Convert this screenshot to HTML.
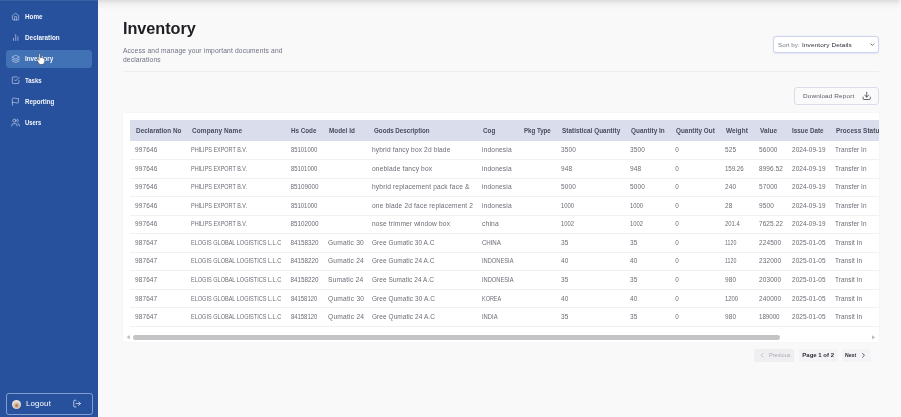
<!DOCTYPE html>
<html><head><meta charset="utf-8"><title>Inventory</title>
<style>
html,body{margin:0;padding:0;}
body{width:901px;height:417px;overflow:hidden;background:#f9f9fa;font-family:"Liberation Sans",sans-serif;position:relative;}
.t{position:absolute;white-space:nowrap;display:block;transform-origin:0 50%;}
.r{position:absolute;}
svg.i{position:absolute;overflow:visible;}
#wrap{position:absolute;left:-10px;top:-10px;width:921px;height:437px;background:#f9f9fa;filter:blur(0.55px);}
#in{position:absolute;left:10px;top:10px;width:901px;height:417px;}
</style></head><body>
<div id="wrap"><div id="in">
<div class="r" style="left:-10.00px;top:-10.00px;width:108.20px;height:440.00px;background:#27509d;"></div>
<div class="r" style="left:6.20px;top:50.10px;width:86.30px;height:17.80px;background:#4272b6;border-radius:3.5px;"></div>
<span class="t" style="left:24.80px;top:12px;font-size:6.8px;line-height:10px;font-weight:bold;color:#f2f5fc;letter-spacing:0.000px;transform:scaleX(0.9263);">Home</span>
<span class="t" style="left:24.80px;top:33px;font-size:6.8px;line-height:10px;font-weight:bold;color:#f2f5fc;letter-spacing:0.000px;transform:scaleX(0.9369);">Declaration</span>
<span class="t" style="left:24.80px;top:54px;font-size:6.8px;line-height:10px;font-weight:bold;color:#f2f5fc;letter-spacing:0.000px;transform:scaleX(0.9213);">Inventory</span>
<span class="t" style="left:24.80px;top:76px;font-size:6.8px;line-height:10px;font-weight:bold;color:#f2f5fc;letter-spacing:0.000px;transform:scaleX(0.8894);">Tasks</span>
<span class="t" style="left:24.80px;top:97px;font-size:6.8px;line-height:10px;font-weight:bold;color:#f2f5fc;letter-spacing:0.000px;transform:scaleX(0.9094);">Reporting</span>
<span class="t" style="left:24.80px;top:118px;font-size:6.8px;line-height:10px;font-weight:bold;color:#f2f5fc;letter-spacing:0.000px;transform:scaleX(0.8570);">Users</span>
<div class="r" style="left:6.00px;top:392.70px;width:86.60px;height:21.90px;background:transparent;border:0.8px solid rgba(185,204,236,0.62);border-radius:2.8px;box-sizing:border-box;"></div>
<span class="t" style="left:25.50px;top:398px;font-size:7.6px;line-height:11px;color:#ffffff;letter-spacing:0.144px;transform:scaleX(1.0371);">Logout</span>
<span class="t" style="left:122.80px;top:17px;font-size:16.4px;line-height:22px;font-weight:bold;color:#1e1e24;letter-spacing:-0.062px;transform:scaleX(0.9924);">Inventory</span>
<span class="t" style="left:122.60px;top:46px;font-size:6.4px;line-height:10px;color:#6f7280;letter-spacing:0.145px;transform:scaleX(1.0457);">Access and manage your important documents and</span>
<span class="t" style="left:122.60px;top:55px;font-size:6.4px;line-height:10px;color:#6f7280;letter-spacing:0.138px;transform:scaleX(1.0480);">declarations</span>
<div class="r" style="left:122.50px;top:70.90px;width:756.50px;height:0.80px;background:#eeeef0;"></div>
<div class="r" style="left:773.20px;top:35.90px;width:105.60px;height:17.60px;background:#ffffff;border:0.8px solid #cdd2f0;border-radius:3.2px;box-sizing:border-box;box-shadow:0 0.5px 1.2px rgba(120,130,200,0.15);"></div>
<span class="t" style="left:777.80px;top:40px;font-size:6.2px;line-height:9px;color:#7a7d88;letter-spacing:0.021px;transform:scaleX(1.0078);">Sort by:</span>
<span class="t" style="left:802.00px;top:40px;font-size:6.2px;line-height:9px;color:#2a2d38;letter-spacing:0.110px;transform:scaleX(1.0406);">Inventory Details</span>
<div class="r" style="left:794.00px;top:86.90px;width:84.80px;height:17.80px;background:#fafafb;border:0.8px solid #dadde9;border-radius:3.2px;box-sizing:border-box;"></div>
<span class="t" style="left:802.60px;top:91px;font-size:6.2px;line-height:9px;color:#5a5d68;letter-spacing:0.114px;transform:scaleX(1.0358);">Download Report</span>
<div class="r" style="left:122.50px;top:112.50px;width:756.20px;height:229.00px;background:#ffffff;border-radius:2px;box-shadow:0 0 2px rgba(0,0,0,0.06);"></div>
<div class="r" style="left:130.00px;top:120.00px;width:748.70px;height:21.00px;background:#d9ddec;"></div>
<span class="t" style="left:135.50px;top:126px;font-size:6.3px;line-height:10px;font-weight:bold;color:#484c60;letter-spacing:0.037px;transform:scaleX(1.0116);">Declaration No</span>
<span class="t" style="left:192.40px;top:126px;font-size:6.3px;line-height:10px;font-weight:bold;color:#484c60;letter-spacing:0.102px;transform:scaleX(1.0258);">Company Name</span>
<span class="t" style="left:291.40px;top:126px;font-size:6.3px;line-height:10px;font-weight:bold;color:#484c60;letter-spacing:-0.011px;transform:scaleX(0.9970);">Hs Code</span>
<span class="t" style="left:329.10px;top:126px;font-size:6.3px;line-height:10px;font-weight:bold;color:#484c60;letter-spacing:0.016px;transform:scaleX(1.0049);">Model Id</span>
<span class="t" style="left:373.50px;top:126px;font-size:6.3px;line-height:10px;font-weight:bold;color:#484c60;letter-spacing:-0.025px;transform:scaleX(0.9924);">Goods Description</span>
<span class="t" style="left:483.20px;top:126px;font-size:6.3px;line-height:10px;font-weight:bold;color:#484c60;letter-spacing:0.025px;transform:scaleX(1.0062);">Cog</span>
<span class="t" style="left:523.60px;top:126px;font-size:6.3px;line-height:10px;font-weight:bold;color:#484c60;letter-spacing:-0.053px;transform:scaleX(0.9846);">Pkg Type</span>
<span class="t" style="left:561.90px;top:126px;font-size:6.3px;line-height:10px;font-weight:bold;color:#484c60;letter-spacing:0.031px;transform:scaleX(1.0108);">Statistical Quantity</span>
<span class="t" style="left:631.30px;top:126px;font-size:6.3px;line-height:10px;font-weight:bold;color:#484c60;letter-spacing:0.041px;transform:scaleX(1.0136);">Quantity In</span>
<span class="t" style="left:676.20px;top:126px;font-size:6.3px;line-height:10px;font-weight:bold;color:#484c60;letter-spacing:0.027px;transform:scaleX(1.0085);">Quantity Out</span>
<span class="t" style="left:726.00px;top:126px;font-size:6.3px;line-height:10px;font-weight:bold;color:#484c60;letter-spacing:0.084px;transform:scaleX(1.0241);">Weight</span>
<span class="t" style="left:759.50px;top:126px;font-size:6.3px;line-height:10px;font-weight:bold;color:#484c60;letter-spacing:0.083px;transform:scaleX(1.0252);">Value</span>
<span class="t" style="left:792.40px;top:126px;font-size:6.3px;line-height:10px;font-weight:bold;color:#484c60;letter-spacing:0.004px;transform:scaleX(1.0013);">Issue Date</span>
<div class="r" style="left:830px;top:120px;width:48.70px;height:21px;overflow:hidden;">
<span class="t" style="left:6.00px;top:6px;font-size:6.3px;line-height:10px;font-weight:bold;color:#484c60;letter-spacing:0.052px;transform:scaleX(1.0161);">Process Status</span>
</div>
<span class="t" style="left:134.50px;top:145px;font-size:6.3px;line-height:10px;color:#6b6d76;letter-spacing:0.121px;transform:scaleX(1.0345);">997646</span>
<span class="t" style="left:191.00px;top:145px;font-size:6.3px;line-height:10px;color:#6b6d76;letter-spacing:0.000px;transform:scaleX(0.8660);">PHILIPS EXPORT B.V.</span>
<span class="t" style="left:290.50px;top:145px;font-size:6.3px;line-height:10px;color:#6b6d76;letter-spacing:0.000px;transform:scaleX(0.9354);">85101000</span>
<span class="t" style="left:372.20px;top:145px;font-size:6.3px;line-height:10px;color:#6b6d76;letter-spacing:0.131px;transform:scaleX(1.0456);">hybrid fancy box 2d blade</span>
<span class="t" style="left:481.80px;top:145px;font-size:6.3px;line-height:10px;color:#6b6d76;letter-spacing:0.153px;transform:scaleX(1.0511);">indonesia</span>
<span class="t" style="left:561.00px;top:145px;font-size:6.3px;line-height:10px;color:#6b6d76;letter-spacing:0.106px;transform:scaleX(1.0304);">3500</span>
<span class="t" style="left:630.40px;top:145px;font-size:6.3px;line-height:10px;color:#6b6d76;letter-spacing:0.106px;transform:scaleX(1.0304);">3500</span>
<span class="t" style="left:675.30px;top:145px;font-size:6.3px;line-height:10px;color:#6b6d76;letter-spacing:0.000px;">0</span>
<span class="t" style="left:725.20px;top:145px;font-size:6.3px;line-height:10px;color:#6b6d76;letter-spacing:0.106px;transform:scaleX(1.0304);">525</span>
<span class="t" style="left:758.60px;top:145px;font-size:6.3px;line-height:10px;color:#6b6d76;letter-spacing:0.106px;transform:scaleX(1.0304);">56000</span>
<span class="t" style="left:791.50px;top:145px;font-size:6.3px;line-height:10px;color:#6b6d76;letter-spacing:0.066px;transform:scaleX(1.0203);">2024-09-19</span>
<span class="t" style="left:834.70px;top:145px;font-size:6.3px;line-height:10px;color:#6b6d76;letter-spacing:0.062px;transform:scaleX(1.0225);">Transfer In</span>
<div class="r" style="left:130.00px;top:159.14px;width:748.70px;height:0.80px;background:#f1f1f4;"></div>
<span class="t" style="left:134.50px;top:164px;font-size:6.3px;line-height:10px;color:#6b6d76;letter-spacing:0.121px;transform:scaleX(1.0345);">997646</span>
<span class="t" style="left:191.00px;top:164px;font-size:6.3px;line-height:10px;color:#6b6d76;letter-spacing:0.000px;transform:scaleX(0.8660);">PHILIPS EXPORT B.V.</span>
<span class="t" style="left:290.50px;top:164px;font-size:6.3px;line-height:10px;color:#6b6d76;letter-spacing:0.000px;transform:scaleX(0.9354);">85101000</span>
<span class="t" style="left:372.20px;top:164px;font-size:6.3px;line-height:10px;color:#6b6d76;letter-spacing:0.153px;transform:scaleX(1.0505);">oneblade fancy box</span>
<span class="t" style="left:481.80px;top:164px;font-size:6.3px;line-height:10px;color:#6b6d76;letter-spacing:0.153px;transform:scaleX(1.0511);">indonesia</span>
<span class="t" style="left:561.00px;top:164px;font-size:6.3px;line-height:10px;color:#6b6d76;letter-spacing:0.106px;transform:scaleX(1.0304);">948</span>
<span class="t" style="left:630.40px;top:164px;font-size:6.3px;line-height:10px;color:#6b6d76;letter-spacing:0.106px;transform:scaleX(1.0304);">948</span>
<span class="t" style="left:675.30px;top:164px;font-size:6.3px;line-height:10px;color:#6b6d76;letter-spacing:0.000px;">0</span>
<span class="t" style="left:725.20px;top:164px;font-size:6.3px;line-height:10px;color:#6b6d76;letter-spacing:-0.062px;transform:scaleX(0.9806);">159.26</span>
<span class="t" style="left:758.60px;top:164px;font-size:6.3px;line-height:10px;color:#6b6d76;letter-spacing:0.088px;transform:scaleX(1.0270);">8996.52</span>
<span class="t" style="left:791.50px;top:164px;font-size:6.3px;line-height:10px;color:#6b6d76;letter-spacing:0.066px;transform:scaleX(1.0203);">2024-09-19</span>
<span class="t" style="left:834.70px;top:164px;font-size:6.3px;line-height:10px;color:#6b6d76;letter-spacing:0.062px;transform:scaleX(1.0225);">Transfer In</span>
<div class="r" style="left:130.00px;top:177.68px;width:748.70px;height:0.80px;background:#f1f1f4;"></div>
<span class="t" style="left:134.50px;top:182px;font-size:6.3px;line-height:10px;color:#6b6d76;letter-spacing:0.121px;transform:scaleX(1.0345);">997646</span>
<span class="t" style="left:191.00px;top:182px;font-size:6.3px;line-height:10px;color:#6b6d76;letter-spacing:0.000px;transform:scaleX(0.8660);">PHILIPS EXPORT B.V.</span>
<span class="t" style="left:290.50px;top:182px;font-size:6.3px;line-height:10px;color:#6b6d76;letter-spacing:-0.003px;">85109000</span>
<span class="t" style="left:372.20px;top:182px;font-size:6.3px;line-height:10px;color:#6b6d76;letter-spacing:0.152px;transform:scaleX(1.0517);">hybrid replacement pack face &amp;</span>
<span class="t" style="left:481.80px;top:182px;font-size:6.3px;line-height:10px;color:#6b6d76;letter-spacing:0.153px;transform:scaleX(1.0511);">indonesia</span>
<span class="t" style="left:561.00px;top:182px;font-size:6.3px;line-height:10px;color:#6b6d76;letter-spacing:0.106px;transform:scaleX(1.0304);">5000</span>
<span class="t" style="left:630.40px;top:182px;font-size:6.3px;line-height:10px;color:#6b6d76;letter-spacing:0.106px;transform:scaleX(1.0304);">5000</span>
<span class="t" style="left:675.30px;top:182px;font-size:6.3px;line-height:10px;color:#6b6d76;letter-spacing:0.000px;">0</span>
<span class="t" style="left:725.20px;top:182px;font-size:6.3px;line-height:10px;color:#6b6d76;letter-spacing:0.106px;transform:scaleX(1.0304);">240</span>
<span class="t" style="left:758.60px;top:182px;font-size:6.3px;line-height:10px;color:#6b6d76;letter-spacing:0.106px;transform:scaleX(1.0304);">57000</span>
<span class="t" style="left:791.50px;top:182px;font-size:6.3px;line-height:10px;color:#6b6d76;letter-spacing:0.066px;transform:scaleX(1.0203);">2024-09-19</span>
<span class="t" style="left:834.70px;top:182px;font-size:6.3px;line-height:10px;color:#6b6d76;letter-spacing:0.062px;transform:scaleX(1.0225);">Transfer In</span>
<div class="r" style="left:130.00px;top:196.22px;width:748.70px;height:0.80px;background:#f1f1f4;"></div>
<span class="t" style="left:134.50px;top:201px;font-size:6.3px;line-height:10px;color:#6b6d76;letter-spacing:0.121px;transform:scaleX(1.0345);">997646</span>
<span class="t" style="left:191.00px;top:201px;font-size:6.3px;line-height:10px;color:#6b6d76;letter-spacing:0.000px;transform:scaleX(0.8660);">PHILIPS EXPORT B.V.</span>
<span class="t" style="left:290.50px;top:201px;font-size:6.3px;line-height:10px;color:#6b6d76;letter-spacing:0.000px;transform:scaleX(0.9354);">85101000</span>
<span class="t" style="left:372.20px;top:201px;font-size:6.3px;line-height:10px;color:#6b6d76;letter-spacing:0.148px;transform:scaleX(1.0501);">one blade 2d face replacement 2</span>
<span class="t" style="left:481.80px;top:201px;font-size:6.3px;line-height:10px;color:#6b6d76;letter-spacing:0.153px;transform:scaleX(1.0511);">indonesia</span>
<span class="t" style="left:561.00px;top:201px;font-size:6.3px;line-height:10px;color:#6b6d76;letter-spacing:0.000px;transform:scaleX(0.9354);">1000</span>
<span class="t" style="left:630.40px;top:201px;font-size:6.3px;line-height:10px;color:#6b6d76;letter-spacing:0.000px;transform:scaleX(0.9354);">1000</span>
<span class="t" style="left:675.30px;top:201px;font-size:6.3px;line-height:10px;color:#6b6d76;letter-spacing:0.000px;">0</span>
<span class="t" style="left:725.20px;top:201px;font-size:6.3px;line-height:10px;color:#6b6d76;letter-spacing:0.106px;transform:scaleX(1.0304);">28</span>
<span class="t" style="left:758.60px;top:201px;font-size:6.3px;line-height:10px;color:#6b6d76;letter-spacing:0.106px;transform:scaleX(1.0304);">9500</span>
<span class="t" style="left:791.50px;top:201px;font-size:6.3px;line-height:10px;color:#6b6d76;letter-spacing:0.066px;transform:scaleX(1.0203);">2024-09-19</span>
<span class="t" style="left:834.70px;top:201px;font-size:6.3px;line-height:10px;color:#6b6d76;letter-spacing:0.062px;transform:scaleX(1.0225);">Transfer In</span>
<div class="r" style="left:130.00px;top:214.76px;width:748.70px;height:0.80px;background:#f1f1f4;"></div>
<span class="t" style="left:134.50px;top:219px;font-size:6.3px;line-height:10px;color:#6b6d76;letter-spacing:0.121px;transform:scaleX(1.0345);">997646</span>
<span class="t" style="left:191.00px;top:219px;font-size:6.3px;line-height:10px;color:#6b6d76;letter-spacing:0.000px;transform:scaleX(0.8660);">PHILIPS EXPORT B.V.</span>
<span class="t" style="left:290.50px;top:219px;font-size:6.3px;line-height:10px;color:#6b6d76;letter-spacing:-0.003px;">85102000</span>
<span class="t" style="left:372.20px;top:219px;font-size:6.3px;line-height:10px;color:#6b6d76;letter-spacing:0.142px;transform:scaleX(1.0457);">nose trimmer window box</span>
<span class="t" style="left:481.80px;top:219px;font-size:6.3px;line-height:10px;color:#6b6d76;letter-spacing:0.179px;transform:scaleX(1.0593);">china</span>
<span class="t" style="left:561.00px;top:219px;font-size:6.3px;line-height:10px;color:#6b6d76;letter-spacing:0.000px;transform:scaleX(0.9354);">1002</span>
<span class="t" style="left:630.40px;top:219px;font-size:6.3px;line-height:10px;color:#6b6d76;letter-spacing:0.000px;transform:scaleX(0.9354);">1002</span>
<span class="t" style="left:675.30px;top:219px;font-size:6.3px;line-height:10px;color:#6b6d76;letter-spacing:0.000px;">0</span>
<span class="t" style="left:725.20px;top:219px;font-size:6.3px;line-height:10px;color:#6b6d76;letter-spacing:0.000px;transform:scaleX(0.9394);">201.4</span>
<span class="t" style="left:758.60px;top:219px;font-size:6.3px;line-height:10px;color:#6b6d76;letter-spacing:0.088px;transform:scaleX(1.0270);">7625.22</span>
<span class="t" style="left:791.50px;top:219px;font-size:6.3px;line-height:10px;color:#6b6d76;letter-spacing:0.066px;transform:scaleX(1.0203);">2024-09-19</span>
<span class="t" style="left:834.70px;top:219px;font-size:6.3px;line-height:10px;color:#6b6d76;letter-spacing:0.062px;transform:scaleX(1.0225);">Transfer In</span>
<div class="r" style="left:130.00px;top:233.30px;width:748.70px;height:0.80px;background:#f1f1f4;"></div>
<span class="t" style="left:134.50px;top:238px;font-size:6.3px;line-height:10px;color:#6b6d76;letter-spacing:0.105px;transform:scaleX(1.0299);">987647</span>
<span class="t" style="left:191.00px;top:238px;font-size:6.3px;line-height:10px;color:#6b6d76;letter-spacing:0.000px;transform:scaleX(0.8818);">ELOGIS GLOBAL LOGISTICS L.L.C</span>
<span class="t" style="left:290.50px;top:238px;font-size:6.3px;line-height:10px;color:#6b6d76;letter-spacing:-0.003px;">84158320</span>
<span class="t" style="left:328.00px;top:238px;font-size:6.3px;line-height:10px;color:#6b6d76;letter-spacing:0.184px;transform:scaleX(1.0571);">Gumatic 30</span>
<span class="t" style="left:372.20px;top:238px;font-size:6.3px;line-height:10px;color:#6b6d76;letter-spacing:0.071px;transform:scaleX(1.0225);">Gree Gumatic 30 A.C</span>
<span class="t" style="left:481.80px;top:238px;font-size:6.3px;line-height:10px;color:#6b6d76;letter-spacing:-0.091px;transform:scaleX(0.9767);">CHINA</span>
<span class="t" style="left:561.00px;top:238px;font-size:6.3px;line-height:10px;color:#6b6d76;letter-spacing:0.106px;transform:scaleX(1.0304);">35</span>
<span class="t" style="left:630.40px;top:238px;font-size:6.3px;line-height:10px;color:#6b6d76;letter-spacing:0.106px;transform:scaleX(1.0304);">35</span>
<span class="t" style="left:675.30px;top:238px;font-size:6.3px;line-height:10px;color:#6b6d76;letter-spacing:0.000px;">0</span>
<span class="t" style="left:725.20px;top:238px;font-size:6.3px;line-height:10px;color:#6b6d76;letter-spacing:0.000px;transform:scaleX(0.8370);">1120</span>
<span class="t" style="left:758.60px;top:238px;font-size:6.3px;line-height:10px;color:#6b6d76;letter-spacing:0.106px;transform:scaleX(1.0304);">224500</span>
<span class="t" style="left:791.50px;top:238px;font-size:6.3px;line-height:10px;color:#6b6d76;letter-spacing:0.066px;transform:scaleX(1.0203);">2025-01-05</span>
<span class="t" style="left:834.70px;top:238px;font-size:6.3px;line-height:10px;color:#6b6d76;letter-spacing:0.053px;transform:scaleX(1.0205);">Transit In</span>
<div class="r" style="left:130.00px;top:251.84px;width:748.70px;height:0.80px;background:#f1f1f4;"></div>
<span class="t" style="left:134.50px;top:256px;font-size:6.3px;line-height:10px;color:#6b6d76;letter-spacing:0.105px;transform:scaleX(1.0299);">987647</span>
<span class="t" style="left:191.00px;top:256px;font-size:6.3px;line-height:10px;color:#6b6d76;letter-spacing:0.000px;transform:scaleX(0.8818);">ELOGIS GLOBAL LOGISTICS L.L.C</span>
<span class="t" style="left:290.50px;top:256px;font-size:6.3px;line-height:10px;color:#6b6d76;letter-spacing:-0.003px;">84158220</span>
<span class="t" style="left:328.00px;top:256px;font-size:6.3px;line-height:10px;color:#6b6d76;letter-spacing:0.184px;transform:scaleX(1.0571);">Gumatic 24</span>
<span class="t" style="left:372.20px;top:256px;font-size:6.3px;line-height:10px;color:#6b6d76;letter-spacing:0.071px;transform:scaleX(1.0225);">Gree Gumatic 24 A.C</span>
<span class="t" style="left:481.80px;top:256px;font-size:6.3px;line-height:10px;color:#6b6d76;letter-spacing:0.000px;transform:scaleX(0.9089);">INDONESIA</span>
<span class="t" style="left:561.00px;top:256px;font-size:6.3px;line-height:10px;color:#6b6d76;letter-spacing:0.106px;transform:scaleX(1.0304);">40</span>
<span class="t" style="left:630.40px;top:256px;font-size:6.3px;line-height:10px;color:#6b6d76;letter-spacing:0.106px;transform:scaleX(1.0304);">40</span>
<span class="t" style="left:675.30px;top:256px;font-size:6.3px;line-height:10px;color:#6b6d76;letter-spacing:0.000px;">0</span>
<span class="t" style="left:725.20px;top:256px;font-size:6.3px;line-height:10px;color:#6b6d76;letter-spacing:0.000px;transform:scaleX(0.8370);">1120</span>
<span class="t" style="left:758.60px;top:256px;font-size:6.3px;line-height:10px;color:#6b6d76;letter-spacing:0.106px;transform:scaleX(1.0304);">232000</span>
<span class="t" style="left:791.50px;top:256px;font-size:6.3px;line-height:10px;color:#6b6d76;letter-spacing:0.066px;transform:scaleX(1.0203);">2025-01-05</span>
<span class="t" style="left:834.70px;top:256px;font-size:6.3px;line-height:10px;color:#6b6d76;letter-spacing:0.053px;transform:scaleX(1.0205);">Transit In</span>
<div class="r" style="left:130.00px;top:270.38px;width:748.70px;height:0.80px;background:#f1f1f4;"></div>
<span class="t" style="left:134.50px;top:275px;font-size:6.3px;line-height:10px;color:#6b6d76;letter-spacing:0.105px;transform:scaleX(1.0299);">987647</span>
<span class="t" style="left:191.00px;top:275px;font-size:6.3px;line-height:10px;color:#6b6d76;letter-spacing:0.000px;transform:scaleX(0.8818);">ELOGIS GLOBAL LOGISTICS L.L.C</span>
<span class="t" style="left:290.50px;top:275px;font-size:6.3px;line-height:10px;color:#6b6d76;letter-spacing:-0.003px;">84158220</span>
<span class="t" style="left:328.00px;top:275px;font-size:6.3px;line-height:10px;color:#6b6d76;letter-spacing:0.193px;transform:scaleX(1.0613);">Sumatic 24</span>
<span class="t" style="left:372.20px;top:275px;font-size:6.3px;line-height:10px;color:#6b6d76;letter-spacing:0.076px;transform:scaleX(1.0244);">Gree Sumatic 24 A.C</span>
<span class="t" style="left:481.80px;top:275px;font-size:6.3px;line-height:10px;color:#6b6d76;letter-spacing:0.000px;transform:scaleX(0.9089);">INDONESIA</span>
<span class="t" style="left:561.00px;top:275px;font-size:6.3px;line-height:10px;color:#6b6d76;letter-spacing:0.106px;transform:scaleX(1.0304);">35</span>
<span class="t" style="left:630.40px;top:275px;font-size:6.3px;line-height:10px;color:#6b6d76;letter-spacing:0.106px;transform:scaleX(1.0304);">35</span>
<span class="t" style="left:675.30px;top:275px;font-size:6.3px;line-height:10px;color:#6b6d76;letter-spacing:0.000px;">0</span>
<span class="t" style="left:725.20px;top:275px;font-size:6.3px;line-height:10px;color:#6b6d76;letter-spacing:0.106px;transform:scaleX(1.0304);">980</span>
<span class="t" style="left:758.60px;top:275px;font-size:6.3px;line-height:10px;color:#6b6d76;letter-spacing:0.106px;transform:scaleX(1.0304);">203000</span>
<span class="t" style="left:791.50px;top:275px;font-size:6.3px;line-height:10px;color:#6b6d76;letter-spacing:0.066px;transform:scaleX(1.0203);">2025-01-05</span>
<span class="t" style="left:834.70px;top:275px;font-size:6.3px;line-height:10px;color:#6b6d76;letter-spacing:0.053px;transform:scaleX(1.0205);">Transit In</span>
<div class="r" style="left:130.00px;top:288.92px;width:748.70px;height:0.80px;background:#f1f1f4;"></div>
<span class="t" style="left:134.50px;top:294px;font-size:6.3px;line-height:10px;color:#6b6d76;letter-spacing:0.105px;transform:scaleX(1.0299);">987647</span>
<span class="t" style="left:191.00px;top:294px;font-size:6.3px;line-height:10px;color:#6b6d76;letter-spacing:0.000px;transform:scaleX(0.8818);">ELOGIS GLOBAL LOGISTICS L.L.C</span>
<span class="t" style="left:290.50px;top:294px;font-size:6.3px;line-height:10px;color:#6b6d76;letter-spacing:0.000px;transform:scaleX(0.9354);">84158120</span>
<span class="t" style="left:328.00px;top:294px;font-size:6.3px;line-height:10px;color:#6b6d76;letter-spacing:0.198px;transform:scaleX(1.0615);">Qumatic 30</span>
<span class="t" style="left:372.20px;top:294px;font-size:6.3px;line-height:10px;color:#6b6d76;letter-spacing:0.079px;transform:scaleX(1.0250);">Gree Qumatic 30 A.C</span>
<span class="t" style="left:481.80px;top:294px;font-size:6.3px;line-height:10px;color:#6b6d76;letter-spacing:0.000px;transform:scaleX(0.8659);">KOREA</span>
<span class="t" style="left:561.00px;top:294px;font-size:6.3px;line-height:10px;color:#6b6d76;letter-spacing:0.106px;transform:scaleX(1.0304);">40</span>
<span class="t" style="left:630.40px;top:294px;font-size:6.3px;line-height:10px;color:#6b6d76;letter-spacing:0.106px;transform:scaleX(1.0304);">40</span>
<span class="t" style="left:675.30px;top:294px;font-size:6.3px;line-height:10px;color:#6b6d76;letter-spacing:0.000px;">0</span>
<span class="t" style="left:725.20px;top:294px;font-size:6.3px;line-height:10px;color:#6b6d76;letter-spacing:0.000px;transform:scaleX(0.9354);">1200</span>
<span class="t" style="left:758.60px;top:294px;font-size:6.3px;line-height:10px;color:#6b6d76;letter-spacing:0.106px;transform:scaleX(1.0304);">240000</span>
<span class="t" style="left:791.50px;top:294px;font-size:6.3px;line-height:10px;color:#6b6d76;letter-spacing:0.066px;transform:scaleX(1.0203);">2025-01-05</span>
<span class="t" style="left:834.70px;top:294px;font-size:6.3px;line-height:10px;color:#6b6d76;letter-spacing:0.053px;transform:scaleX(1.0205);">Transit In</span>
<div class="r" style="left:130.00px;top:307.46px;width:748.70px;height:0.80px;background:#f1f1f4;"></div>
<span class="t" style="left:134.50px;top:312px;font-size:6.3px;line-height:10px;color:#6b6d76;letter-spacing:0.105px;transform:scaleX(1.0299);">987647</span>
<span class="t" style="left:191.00px;top:312px;font-size:6.3px;line-height:10px;color:#6b6d76;letter-spacing:0.000px;transform:scaleX(0.8818);">ELOGIS GLOBAL LOGISTICS L.L.C</span>
<span class="t" style="left:290.50px;top:312px;font-size:6.3px;line-height:10px;color:#6b6d76;letter-spacing:0.000px;transform:scaleX(0.9354);">84158120</span>
<span class="t" style="left:328.00px;top:312px;font-size:6.3px;line-height:10px;color:#6b6d76;letter-spacing:0.198px;transform:scaleX(1.0615);">Qumatic 24</span>
<span class="t" style="left:372.20px;top:312px;font-size:6.3px;line-height:10px;color:#6b6d76;letter-spacing:0.079px;transform:scaleX(1.0250);">Gree Qumatic 24 A.C</span>
<span class="t" style="left:481.80px;top:312px;font-size:6.3px;line-height:10px;color:#6b6d76;letter-spacing:0.000px;transform:scaleX(0.9284);">INDIA</span>
<span class="t" style="left:561.00px;top:312px;font-size:6.3px;line-height:10px;color:#6b6d76;letter-spacing:0.106px;transform:scaleX(1.0304);">35</span>
<span class="t" style="left:630.40px;top:312px;font-size:6.3px;line-height:10px;color:#6b6d76;letter-spacing:0.106px;transform:scaleX(1.0304);">35</span>
<span class="t" style="left:675.30px;top:312px;font-size:6.3px;line-height:10px;color:#6b6d76;letter-spacing:0.000px;">0</span>
<span class="t" style="left:725.20px;top:312px;font-size:6.3px;line-height:10px;color:#6b6d76;letter-spacing:0.106px;transform:scaleX(1.0304);">980</span>
<span class="t" style="left:758.60px;top:312px;font-size:6.3px;line-height:10px;color:#6b6d76;letter-spacing:-0.040px;transform:scaleX(0.9887);">189000</span>
<span class="t" style="left:791.50px;top:312px;font-size:6.3px;line-height:10px;color:#6b6d76;letter-spacing:0.066px;transform:scaleX(1.0203);">2025-01-05</span>
<span class="t" style="left:834.70px;top:312px;font-size:6.3px;line-height:10px;color:#6b6d76;letter-spacing:0.053px;transform:scaleX(1.0205);">Transit In</span>
<div class="r" style="left:130.00px;top:326.00px;width:748.70px;height:0.80px;background:#f1f1f4;"></div>
<div class="r" style="left:133.00px;top:335.00px;width:647.30px;height:4.50px;background:#c4c4c6;border-radius:2.3px;"></div>
<div class="r" style="left:754.30px;top:349.00px;width:39.70px;height:12.60px;background:#efeff1;border-radius:2px;"></div>
<span class="t" style="left:769.00px;top:351px;font-size:5.9px;line-height:9px;color:#a9abb3;letter-spacing:0.000px;transform:scaleX(0.9366);">Previous</span>
<div class="r" style="left:798.50px;top:349.00px;width:39.50px;height:12.60px;background:#f4f4f6;border-radius:2px;"></div>
<span class="t" style="left:802.30px;top:351px;font-size:6.0px;line-height:9px;font-weight:bold;color:#2c2e38;letter-spacing:0.001px;">Page 1 of 2</span>
<div class="r" style="left:841.50px;top:349.00px;width:29.50px;height:12.60px;background:#f4f4f6;border-radius:2px;"></div>
<span class="t" style="left:845.30px;top:351px;font-size:5.9px;line-height:9px;font-weight:bold;color:#2c2e38;letter-spacing:0.000px;transform:scaleX(0.8758);">Next</span>
<div class="r" style="left:98.2px;top:-1px;width:810px;height:11px;background:linear-gradient(to bottom, rgba(0,0,0,0.125) 0px, rgba(0,0,0,0.105) 1.5px, rgba(0,0,0,0.035) 5px, rgba(0,0,0,0) 11px);"></div>
<div class="r" style="left:-10px;top:-1px;width:108.2px;height:3px;background:linear-gradient(to bottom, rgba(170,180,200,0.4) 0px, rgba(170,180,200,0.2) 1.2px, rgba(170,180,200,0) 2.4px);"></div>
<div class="r" style="left:897px;top:0;width:4px;height:417px;background:linear-gradient(to right, rgba(255,255,255,0), rgba(255,255,255,0.6));"></div>
<svg class="i" style="left:11px;top:12px;" width="11" height="11" viewBox="0 0 11 11" fill="none" stroke="rgba(235,241,252,0.82)" stroke-width="1.8" stroke-linecap="round" stroke-linejoin="round"><g transform="translate(0.550 0.550) scale(0.3375)"><path d="m3 9 9-7 9 7v11a2 2 0 0 1-2 2H5a2 2 0 0 1-2-2z"/><path d="M9 22V12h6v10"/></g></svg>
<svg class="i" style="left:11px;top:33px;" width="11" height="11" viewBox="0 0 11 11" fill="none" stroke="rgba(235,241,252,0.82)" stroke-width="1.8" stroke-linecap="round" stroke-linejoin="round"><g transform="translate(0.300 0.100) scale(0.3667)"><path d="M18 20V10"/><path d="M12 20V4"/><path d="M6 20v-6"/></g></svg>
<svg class="i" style="left:11px;top:54px;" width="11" height="11" viewBox="0 0 11 11" fill="none" stroke="rgba(235,241,252,0.78)" stroke-width="1.9" stroke-linecap="round" stroke-linejoin="round"><g transform="translate(0.400 0.600) scale(0.3583)"><path d="m12.83 2.18a2 2 0 0 0-1.66 0L2.6 6.08a1 1 0 0 0 0 1.83l8.58 3.91a2 2 0 0 0 1.66 0l8.58-3.9a1 1 0 0 0 0-1.83Z"/><path d="m22 17.65-9.17 4.16a2 2 0 0 1-1.66 0L2 17.65"/><path d="m22 12.65-9.17 4.16a2 2 0 0 1-1.66 0L2 12.65"/></g></svg>
<svg class="i" style="left:11px;top:75px;" width="11" height="11" viewBox="0 0 11 11" fill="none" stroke="rgba(235,241,252,0.82)" stroke-width="1.8" stroke-linecap="round" stroke-linejoin="round"><g transform="translate(0.200 0.800) scale(0.3667)"><path d="m9 11 3 3L22 4"/><path d="M21 12v7a2 2 0 0 1-2 2H5a2 2 0 0 1-2-2V5a2 2 0 0 1 2-2h11"/></g></svg>
<svg class="i" style="left:11px;top:97px;" width="11" height="11" viewBox="0 0 11 11" fill="none" stroke="rgba(235,241,252,0.82)" stroke-width="1.8" stroke-linecap="round" stroke-linejoin="round"><g transform="translate(0.100 0.200) scale(0.3667)"><path d="M4 15s1-1 4-1 5 2 8 2 4-1 4-1V3s-1 1-4 1-5-2-8-2-4 1-4 1z"/><path d="M4 22v-7"/></g></svg>
<svg class="i" style="left:11px;top:118px;" width="12" height="12" viewBox="0 0 12 12" fill="none" stroke="rgba(235,241,252,0.82)" stroke-width="1.8" stroke-linecap="round" stroke-linejoin="round"><g transform="translate(0.000 0.000) scale(0.3833)"><path d="M16 21v-2a4 4 0 0 0-4-4H6a4 4 0 0 0-4 4v2"/><circle cx="9" cy="7" r="4"/><path d="M22 21v-2a4 4 0 0 0-3-3.87"/><path d="M16 3.13a4 4 0 0 1 0 7.75"/></g></svg>
<svg class="i" style="left:72px;top:399px;" width="11" height="11" viewBox="0 0 11 11" fill="none" stroke="rgba(240,245,255,0.9)" stroke-width="2.1" stroke-linecap="round" stroke-linejoin="round"><g transform="translate(0.650 0.150) scale(0.3708)"><path d="M9 21H5a2 2 0 0 1-2-2V5a2 2 0 0 1 2-2h4"/><path d="m16 17 5-5-5-5"/><path d="M21 12H9"/></g></svg>
<svg class="i" style="left:861px;top:91px;" width="12" height="12" viewBox="0 0 12 12" fill="none" stroke="#3a3d48" stroke-width="2.0" stroke-linecap="round" stroke-linejoin="round"><g transform="translate(0.900 0.100) scale(0.4000)"><path d="M21 15v4a2 2 0 0 1-2 2H5a2 2 0 0 1-2-2v-4"/><path d="m7 10 5 5 5-5"/><path d="M12 15V3"/></g></svg>
<svg class="i" style="left:869px;top:41px;" width="8" height="8" viewBox="0 0 8 8" fill="none" stroke="#3a3d48" stroke-width="3.0" stroke-linecap="round" stroke-linejoin="round"><g transform="translate(0.500 0.800) scale(0.2417)"><path d="m6 9 6 6 6-6"/></g></svg>
<svg class="i" style="left:758px;top:351px;" width="10" height="10" viewBox="0 0 10 10" fill="none" stroke="#a9abb3" stroke-width="2.2" stroke-linecap="round" stroke-linejoin="round"><g transform="translate(0.250 0.550) scale(0.3125)"><path d="m15 18-6-6 6-6"/></g></svg>
<svg class="i" style="left:859px;top:351px;" width="10" height="10" viewBox="0 0 10 10" fill="none" stroke="#2c2e38" stroke-width="2.4" stroke-linecap="round" stroke-linejoin="round"><g transform="translate(0.750 0.550) scale(0.3125)"><path d="m9 18 6-6-6-6"/></g></svg>
<svg class="i" style="left:126px;top:335px;" width="5" height="6" viewBox="0 0 5 6"><path transform="translate(0.6 0.1)" d="M3.2 0L0 2.1L3.2 4.2z" fill="#bdbdc1"/></svg>
<svg class="i" style="left:872px;top:335px;" width="5" height="6" viewBox="0 0 5 6"><path transform="translate(0 0.2)" d="M0 0L3.2 2.1L0 4.2z" fill="#bdbdc1"/></svg>
<div class="r" style="left:12.1px;top:400.0px;width:8.9px;height:8.9px;border-radius:50%;background:radial-gradient(circle at 52% 62%, #a06a58 0%, #c9a58f 22%, #e6dccd 50%, #efe9df 100%);"></div>
<svg class="i" style="left:36px;top:53px;" width="12" height="14" viewBox="0 0 12 14"><g transform="translate(0.4 0.3) scale(0.4684)">
<path d="M5.2 2.2c0-1 .8-1.7 1.7-1.7s1.7.7 1.7 1.7v7.2l.9.1c.3-.5.8-.8 1.4-.8.8 0 1.4.5 1.6 1.2.3-.3.7-.5 1.2-.5.8 0 1.500.6 1.700 1.400.2-.1.500-.2.800-.2 1 0 1.700.8 1.700 1.700v5.200c0 3.700-2.500 6.500-6.300 6.500h-1.600c-2.700 0-4.300-1.200-5.600-3.300l-3.400-5.600c-.5-.8-.3-1.800.5-2.300.8-.5 1.700-.3 2.300.4l1.400 1.800z" fill="#fdfdfd" stroke="#2a3348" stroke-width="1.3" stroke-linejoin="round"/>
</g></svg>
</div></div>
</body></html>
